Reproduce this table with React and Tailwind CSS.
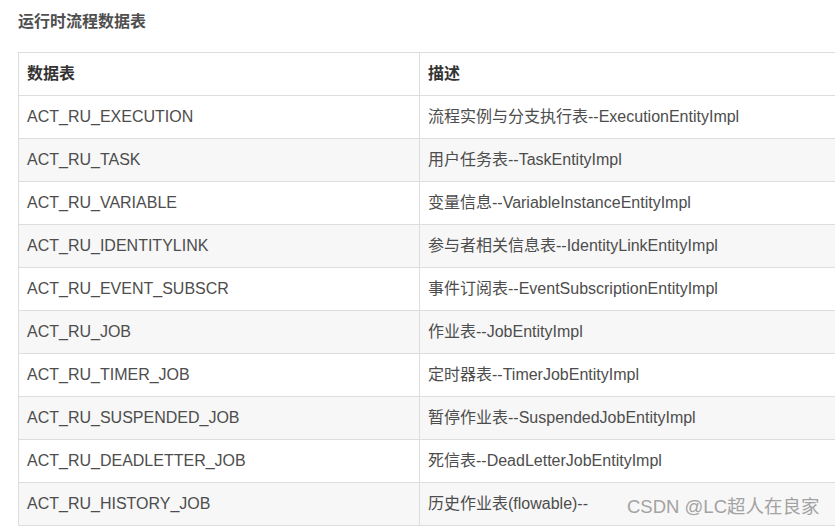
import React from "react";

const rows = [
  ["ACT_RU_EXECUTION", "流程实例与分支执行表--ExecutionEntityImpl"],
  ["ACT_RU_TASK", "用户任务表--TaskEntityImpl"],
  ["ACT_RU_VARIABLE", "变量信息--VariableInstanceEntityImpl"],
  ["ACT_RU_IDENTITYLINK", "参与者相关信息表--IdentityLinkEntityImpl"],
  ["ACT_RU_EVENT_SUBSCR", "事件订阅表--EventSubscriptionEntityImpl"],
  ["ACT_RU_JOB", "作业表--JobEntityImpl"],
  ["ACT_RU_TIMER_JOB", "定时器表--TimerJobEntityImpl"],
  ["ACT_RU_SUSPENDED_JOB", "暂停作业表--SuspendedJobEntityImpl"],
  ["ACT_RU_DEADLETTER_JOB", "死信表--DeadLetterJobEntityImpl"],
  ["ACT_RU_HISTORY_JOB", "历史作业表(flowable)--"],
];

export default function App() {
  return (
    <div
      className="relative w-[835px] h-[527px] overflow-hidden bg-white text-[#4d4d4d]"
      style={{ fontFamily: '"Liberation Sans", Arial, "Noto Sans CJK SC", sans-serif' }}
    >
      <h3 className="pl-[18px] pt-[11px] h-[52px] text-[16px] leading-[22px] font-bold text-[#4f4f4f]">
        运行时流程数据表
      </h3>
      <table className="ml-[18px] w-[900px] border-collapse text-[16px] table-fixed">
        <colgroup>
          <col className="w-[401px]" />
          <col />
        </colgroup>
        <thead>
          <tr className="bg-white">
            <th className="border border-[#ddd] px-[8px] py-[10px] leading-[22px] text-left font-bold text-[#333]">数据表</th>
            <th className="border border-[#ddd] px-[8px] py-[10px] leading-[22px] text-left font-bold text-[#333]">描述</th>
          </tr>
        </thead>
        <tbody>
          {rows.map(([a, b], i) => (
            <tr key={a} className={i % 2 === 1 ? "bg-[#f7f7f7]" : "bg-white"}>
              <td className="border border-[#ddd] px-[8px] py-[10px] leading-[22px] whitespace-nowrap">{a}</td>
              <td className="border border-[#ddd] px-[8px] py-[10px] leading-[22px] whitespace-nowrap">{b}</td>
            </tr>
          ))}
        </tbody>
      </table>
      <div className="absolute left-[627px] top-[496px] text-[18.5px] leading-[22px] text-[#a3a3a3] whitespace-nowrap">
        CSDN @LC超人在良家
      </div>
    </div>
  );
}
